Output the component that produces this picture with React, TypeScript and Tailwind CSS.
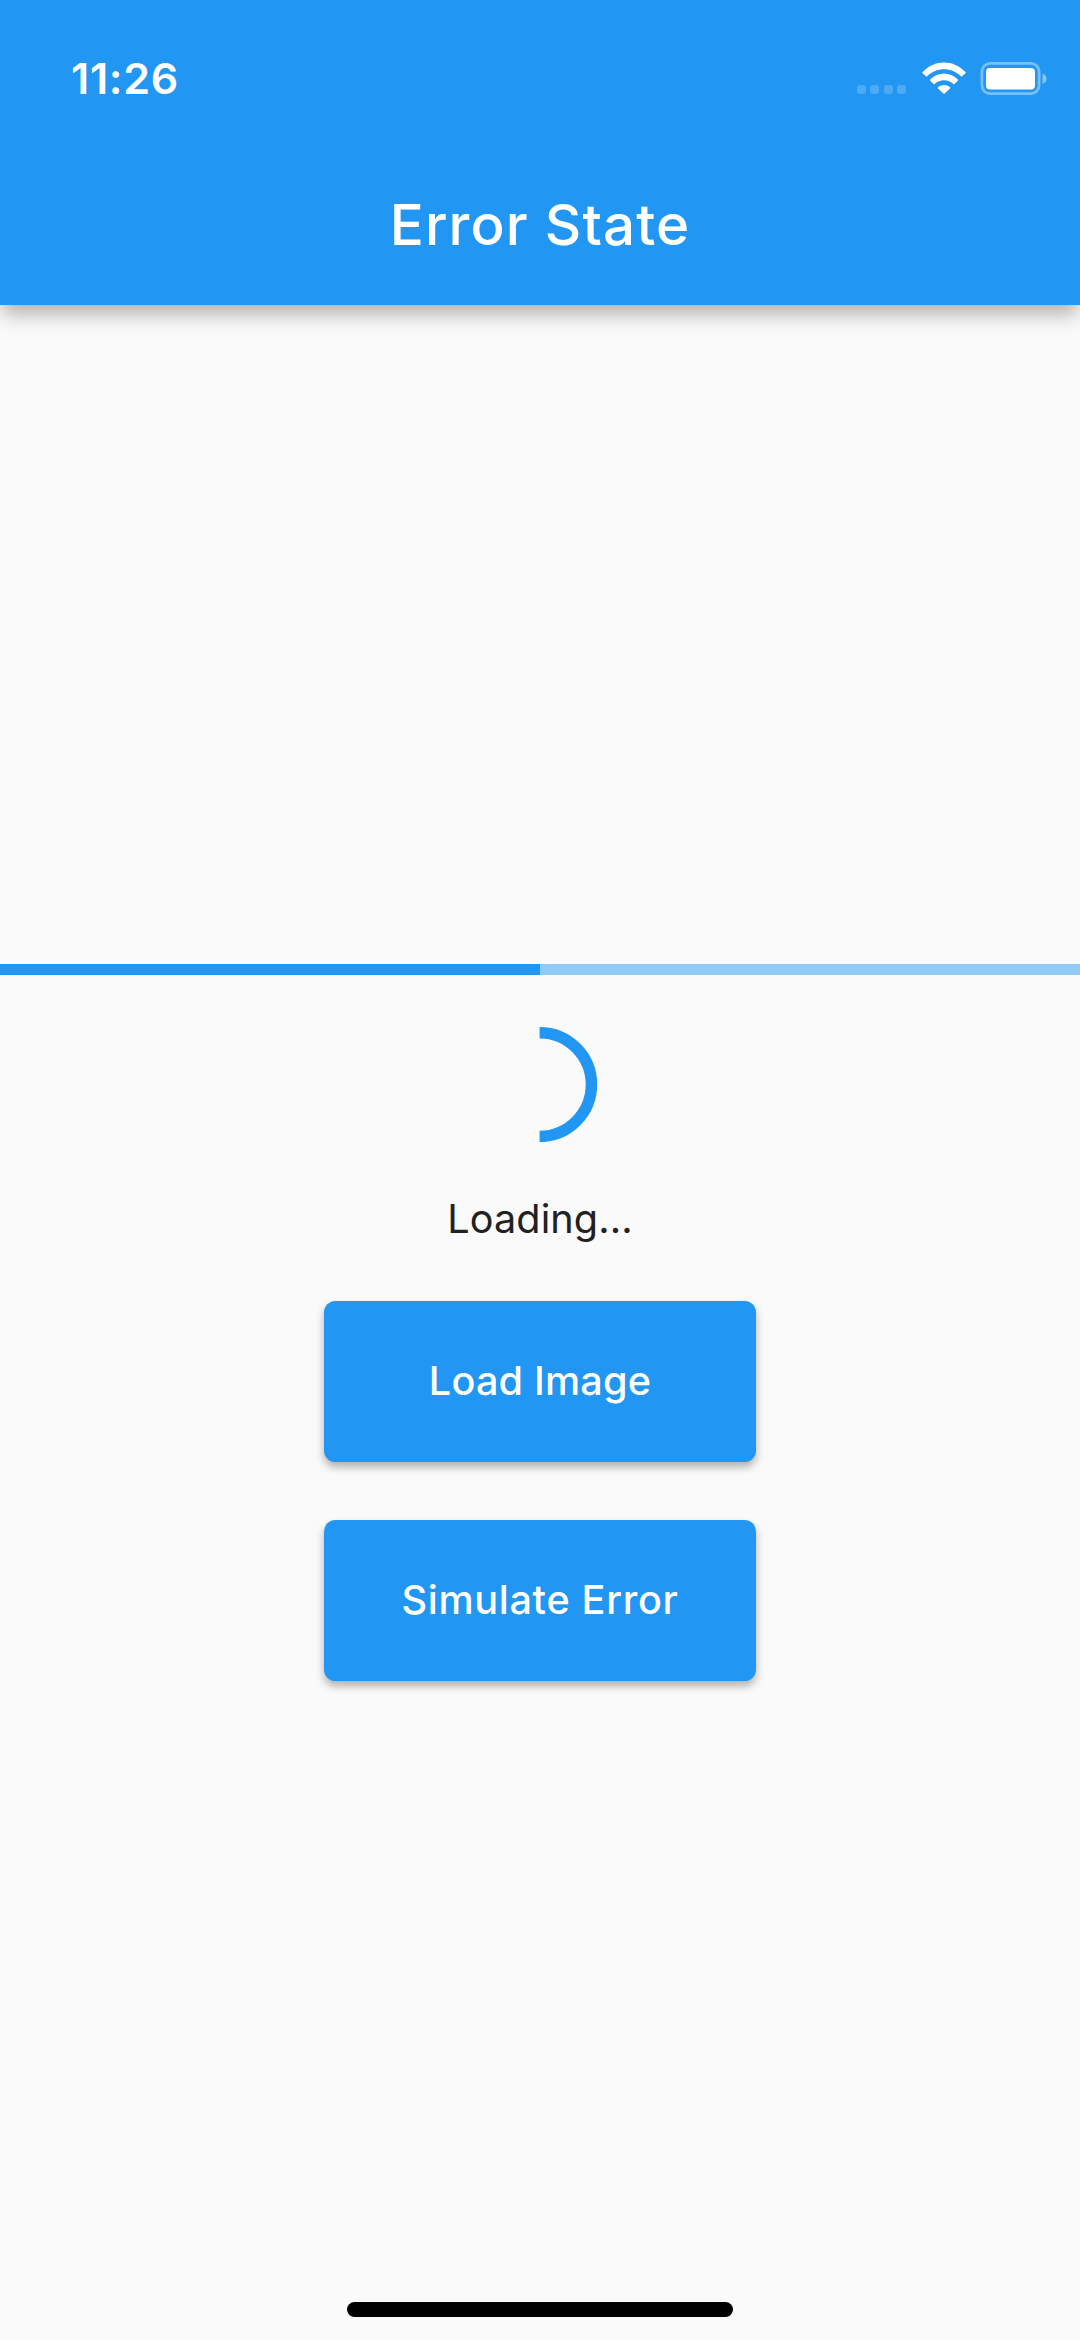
import type { ReactNode } from "react";

function StatusBar() {
  return (
    <div className="flex h-[155.5px] shrink-0 items-start justify-between pl-[71px] pr-[31.6px]">
      <span className="mt-[52px] text-[43px] leading-[52px] font-semibold tracking-[0.7px]">11:26</span>
      <div className="mt-[62px] flex h-[33px] items-start">
        <div className="mt-[23px] flex gap-[4.5px]">
          {[0, 1, 2, 3].map((dot) => (
            <i key={dot} className="size-[9px] rounded-[3.2px] bg-white/20" />
          ))}
        </div>
        <svg className="ml-[15.4px] h-[33px] w-[44px]" viewBox="0 0 44 33" fill="white">
          <path d="M0.6 10.1C12.1-2.8 31.9-2.8 43.4 10.1Q44 10.7 43.4 11.3L40.1 14.3Q39.5 14.8 38.9 14.3C29.3 5 14.7 5 5.1 14.3Q4.5 14.8 3.9 14.3L.6 11.3Q0 10.7 .6 10.1Z" />
          <path d="M8.2 17.6C15.6 9.4 28.4 9.4 35.8 17.6Q36.3 18.2 35.7 18.8L32.5 21.9Q31.9 22.4 31.3 21.9C26 17.1 18 17.1 12.7 21.9Q12.1 22.4 11.5 21.9L8.3 18.8Q7.7 18.2 8.2 17.6Z" />
          <path d="M16 25.2C19.5 22.3 24.5 22.3 28 25.2Q28.6 25.8 28 26.4L22.7 31.6Q22 32.2 21.3 31.6L16 26.4Q15.4 25.8 16 25.2Z" />
        </svg>
        <svg className="ml-[14.6px] h-[33px] w-[68px]" viewBox="0 0 68 33" fill="none">
          <rect x="1.9" y="1.4" width="57.2" height="30.2" rx="8.3" stroke="white" strokeOpacity="0.4" strokeWidth="2.8" />
          <rect x="6" y="6" width="49" height="21.5" rx="4" fill="white" />
          <path d="M62.5 11.5Q66.5 13 66.5 16.7T62.5 22Z" fill="white" fillOpacity="0.45" />
        </svg>
      </div>
    </div>
  );
}

function RaisedButton({ children }: { children: ReactNode }) {
  return (
    <button className="flex h-[161.3px] w-[432.6px] items-center justify-center rounded-[11.5px] bg-[#2196f3] text-[39.6px] font-medium text-white shadow-[0_5px_9px_0_rgba(0,0,0,0.3)]">
      {children}
    </button>
  );
}

export default function App() {
  return (
    <div className="flex h-[2340px] w-[1080px] flex-col overflow-hidden bg-[#fafafa] font-[Inter,sans-serif]">
      <header className="h-[305.4px] shrink-0 bg-[#2196f3] text-white shadow-[0_10px_20px_-2px_rgba(0,0,0,0.32)]">
        <StatusBar />
        <h1 className="text-center text-[56.5px] leading-[138px] font-medium tracking-[1.1px]">Error State</h1>
      </header>
      <main className="flex flex-1 flex-col items-center pt-[658.4px]">
        <div className="h-[11.5px] w-full shrink-0 bg-[#90caf9]">
          <div className="h-full w-1/2 bg-[#2196f3]" />
        </div>
        <svg className="mt-[51.8px] size-[115.2px] shrink-0" viewBox="0 0 115.2 115.2" fill="none">
          <path d="M57.6 5.76A51.84 51.84 0 0 1 57.6 109.44" stroke="#2196f3" strokeWidth="11.52" />
        </svg>
        <p className="mt-[52.8px] text-[39.6px] leading-[49px] tracking-[0.1px] text-[#212121]">Loading...</p>
        <div className="mt-[56.6px] flex flex-col gap-[57.6px]">
          <RaisedButton><span className="tracking-[0.2px]">Load Image</span></RaisedButton>
          <RaisedButton><span className="tracking-[0.7px]">Simulate Error</span></RaisedButton>
        </div>
      </main>
      <footer className="flex shrink-0 justify-center pb-[23px]">
        <div className="h-[14.7px] w-[386.4px] rounded-full bg-black" />
      </footer>
    </div>
  );
}
